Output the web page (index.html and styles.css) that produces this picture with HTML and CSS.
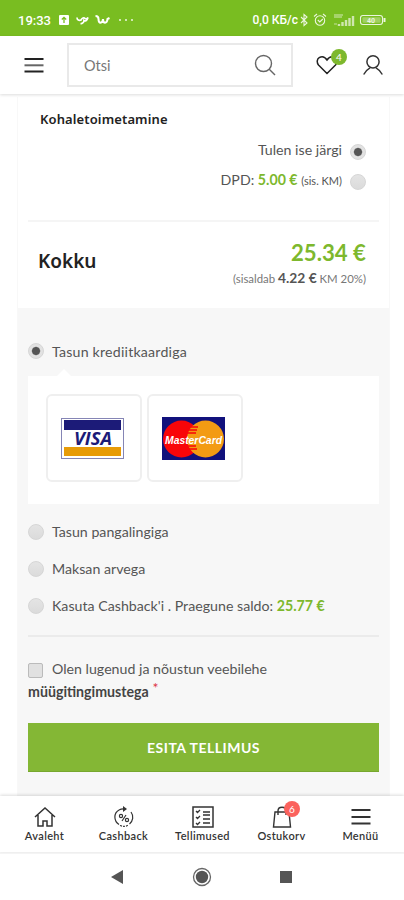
FILE: index.html
```html
<!DOCTYPE html>
<html lang="et">
<head>
<meta charset="utf-8">
<meta name="viewport" content="width=device-width">
<title>Tellimus</title>
<link rel="stylesheet" href="styles.css">
</head>
<body>
<div class="status">
  <span class="clock">19:33</span>
  <svg class="status-left" width="76" height="14" viewBox="0 0 76 14" fill="none" stroke="#fff">
    <rect x="1" y="2" width="10" height="10" rx="1" fill="#fff" stroke="none"/>
    <path d="M6 10V4.500M3.800 6.500 6 4.300 8.200 6.500" stroke="#79bd21" stroke-width="1.300"/>
    <path d="M19 4.500c0 2.500 2 3.500 4 2.500 1-2 3-3 4-1.500 1 .5 2 .5 3-1-1 3.500-3 4-4 3 0 2-2 3.500-3.500 3" stroke-width="1.700"/>
    <path d="M37.500 3c2 0 3 1 3 3 0 5 4 5 4.500 0 0 5 4 5 4.500 0l2-1" stroke-width="2"/>
    <path d="M61 7h2m4 0h2m4 0h2" stroke-width="2" opacity=".65"/>
  </svg>
  <span class="speed">0,0 КБ/с</span>
  <svg class="status-right" width="90" height="16" viewBox="0 0 90 16" fill="none" stroke="#fff" stroke-width="1.100" opacity=".85">
    <path d="M2 5l6 6-3 2.500V2.500L8 5l-6 6"/>
    <circle cx="21" cy="8.500" r="4.700"/><path d="M18.800 8l2 2 3-3M15 4.500l3-2.500M27 4.500 24 2"/>
    <path d="M40 14v-2m3.500 2v-4m3.500 4V8m3.500 6V6m3.500 8V4" stroke-width="2.400" opacity=".75"/>
    <path d="M35 3h9M35 5h8" opacity=".8"/><path d="M35 12h3" opacity=".6"/>
    <rect x="61.500" y="3.500" width="22" height="9" rx="2.500"/><rect x="63.500" y="5.300" width="18" height="5.400" rx="1" fill="#fff" stroke="none" opacity=".35"/>
    <path d="M85.500 6v4" stroke-width="2"/>
    <text x="68" y="11" class="battery">40</text>
  </svg>
</div>
<header class="header">
  <svg class="burger" width="20" height="18" viewBox="0 0 20 18" fill="none" stroke="#222" stroke-width="2"><path d="M.5 3h19M.5 15.500h19"/><path d="M.5 9.300h19" stroke="#666"/></svg>
  <div class="search"><span>Otsi</span>
    <svg width="22" height="22" viewBox="0 0 22 22" fill="none" stroke="#666" stroke-width="1.400"><circle cx="9.500" cy="9.500" r="8"/><path d="m15 15 6 6"/></svg>
  </div>
  <div class="wish">
    <svg width="22" height="20" viewBox="0 0 22 20" fill="none" stroke="#222" stroke-width="1.500"><path d="M11 18.500 2.500 10C.5 7.500 1 4 3.200 2.700 6 1 9 2 11 5c2-3 5-4 7.800-2.300C21 4 21.500 7.500 19.500 10z"/></svg>
    <span class="badge">4</span>
  </div>
  <svg class="user" width="22" height="22" viewBox="0 0 22 22" fill="none" stroke="#333" stroke-width="1.500"><circle cx="11" cy="7.800" r="6.100"/><path d="M1.700 20.500c1.800-3.300 4-5.500 6.300-6.700m6 0c2.300 1.200 4.500 3.400 6.300 6.700"/></svg>
</header>
<main class="page">
  <section class="totals">
    <h3>Kohaletoimetamine</h3>
    <div class="ship"><span class="pickup">Tulen ise järgi</span><i class="radio on"></i></div>
    <div class="ship second"><span class="dpd">DPD: <b>5.00 €</b> <small>(sis. KM)</small></span><i class="radio"></i></div>
    <div class="total">
      <h2>Kokku</h2>
      <div class="sum"><strong>25.34 €</strong><p>(sisaldab <b>4.22 €</b> KM 20%)</p></div>
    </div>
  </section>
  <section class="payment">
    <div class="option first"><i class="radio on"></i><span class="card-label">Tasun krediitkaardiga</span></div>
    <div class="cards">
      <div class="card"><svg width="63" height="41" viewBox="0 0 63 41">
        <rect x=".5" y=".5" width="62" height="40" fill="#fff" stroke="#8585b5"/>
        <path fill="#1c1b78" d="M3 2h57v10H3z"/><path fill="#e79b08" d="M3 29h57v9H3z"/>
        <text class="visa" x="13" y="27" textLength="38" lengthAdjust="spacingAndGlyphs">VISA</text>
      </svg></div>
      <div class="card"><svg width="63" height="43" viewBox="0 0 63 43">
        <path fill="#11117c" d="M0 0h63v43H0z"/><circle cx="19.500" cy="22" r="18.500" fill="#f90509"/><circle cx="43.500" cy="22" r="18.500" fill="#f39b13"/>
        <path d="M29 10h7m-9 3h8m-9 3h8m-8 13h8m-7 3h8" stroke="#f90509" stroke-width="1.500"/>
        <text class="mc" x="3" y="26.500" textLength="57" lengthAdjust="spacingAndGlyphs">MasterCard</text>
      </svg></div>
    </div>
    <div class="option"><i class="radio"></i><span class="bank">Tasun pangalingiga</span></div>
    <div class="option"><i class="radio"></i><span class="invoice">Maksan arvega</span></div>
    <div class="option"><i class="radio"></i><span class="cashback">Kasuta Cashback'i . Praegune saldo: <b>25.77 €</b></span></div>
    <div class="terms"><i class="check"></i><span class="read">Olen lugenud ja nõustun veebilehe</span><br><b>müügitingimustega</b> <em>*</em></div>
    <button class="submit">ESITA TELLIMUS</button>
  </section>
</main>
<nav class="tabs">
  <a><svg width="22" height="22" viewBox="0 0 22 22" fill="none" stroke="#333" stroke-width="1.500"><path d="M1 11 11 2l10 9M4 9v11h5v-5h4v5h5V9"/></svg><span>Avaleht</span></a>
  <a><svg width="22" height="22" viewBox="0 0 22 22" fill="none" stroke="#333" stroke-width="1.200"><path d="M18 6c3 4 2 9-1.500 12M6 18.500C.5 15 .5 7 6 4c2-1.200 4-1.500 6.500-1"/><path d="M7 19.500c3 1.200 6 1 8-.3" stroke-dasharray="2 1"/><path d="m10 0 4 3-4 3z" fill="#333" stroke="none"/><circle cx="8" cy="10" r="1.600"/><circle cx="14" cy="14" r="1.600"/><path d="m9 15 4-6"/></svg><span>Cashback</span></a>
  <a><svg width="22" height="22" viewBox="0 0 22 22" fill="none" stroke="#333" stroke-width="1.500"><rect x="1" y="1" width="20" height="20"/><path d="m4 5 1.500 1.500L8 4m-4 7 1.500 1.500L8 10m-4 7 1.500 1.500L8 16m3-10h7m-7 3h7m-7 4h7m-7 4h7" stroke-width="1.300"/></svg><span>Tellimused</span></a>
  <a class="cart"><svg width="22" height="22" viewBox="0 0 22 22" fill="none" stroke="#333" stroke-width="1.400"><path d="M4 6h14l1.500 15h-17zM7 9V5c0-5 8-5 8 0v4"/></svg><i class="badge">6</i><span>Ostukorv</span></a>
  <a><svg width="22" height="22" viewBox="0 0 22 22" fill="none" stroke="#333" stroke-width="1.800"><path d="M1.500 4h19m-19 7h19m-19 6.500h19"/></svg><span>Menüü</span></a>
</nav>
<footer class="system">
  <svg width="14" height="16" viewBox="0 0 14 16" fill="#555"><path d="M0 8 12 1v14z"/></svg>
  <svg width="20" height="20" viewBox="0 0 20 20"><circle cx="10" cy="10" r="8.500" fill="none" stroke="#666" stroke-width="1.300"/><circle cx="10" cy="10" r="6.200" fill="#555"/></svg>
  <svg width="14" height="14" viewBox="0 0 14 14"><path fill="#555" d="M1 1h12v12H1z"/></svg>
</footer>
</body>
</html>
```
FILE: styles.css
```css
* { box-sizing: border-box; }
body { margin: 0; width: 404px; height: 900px; overflow: hidden; display: flex; flex-direction: column; background: #fff; font-family: Lato, sans-serif; font-size: 14px; color: #555; }
svg { display: block; flex: none; }
h2, h3, p { margin: 0; }
i, em { font-style: normal; }

.status { height: 36px; flex: none; background: #79bd21; color: #fff; display: flex; align-items: center; padding: 4px 15px 0 18px; font-family: Roboto, sans-serif; }
.clock { font-size: 13px; font-weight: 500; width: 40px; }
.speed { margin-left: auto; font-size: 12px; font-weight: 500; white-space: nowrap; }
.status-right { margin-left: 1px; }
.battery { font: 700 7px Roboto, sans-serif; fill: #fff; stroke: none; }

.header { height: 58px; flex: none; display: flex; align-items: center; padding-left: 24px; box-shadow: 0 1px 3px rgba(0,0,0,.14); position: relative; background: #fff; }
.search { margin-left: 23px; width: 226px; height: 44px; border: 2px solid #e9e9e9; display: flex; align-items: center; justify-content: space-between; padding: 0 15px; font-size: 14.5px; color: #777; }
.wish { margin-left: 23px; position: relative; }
.badge { position: absolute; width: 16px; height: 16px; border-radius: 50%; background: #7db82d; color: #fff; font-size: 10px; line-height: 16px; text-align: center; }
.wish .badge { left: 15px; top: -6px; }
.user { margin-left: 24px; }

.page { width: 373px; margin: 3px 0 0 17px; height: 699px; flex: none; display: flex; flex-direction: column; border: solid #f8f8f8; border-width: 0 1px; }
.totals { height: 211px; padding: 0 10px; }
.totals h3 { font: 600 13px/20px "Noto Sans", sans-serif; letter-spacing: .12px; color: #222; margin: 12px 0 0 12px; height: 20px; }
.ship { display: flex; justify-content: flex-end; align-items: center; gap: 8px; padding-right: 13px; height: 30px; margin-top: 8px; font-size: 14.2px; }
.ship.second { margin-top: 0; }
.ship span { padding-bottom: 5px; }
.dpd b, .cashback b { color: #7db82d; }
.dpd small { font-size: 11px; }
.radio { width: 16px; height: 16px; border-radius: 50%; border: 1px solid #d6d6d6; background: linear-gradient(#e4e4e4, #dbdbdb); flex: none; display: block; }
.radio.on { background: radial-gradient(circle, #555 3.5px, #e2e2e2 4.700px); }
.total { display: flex; justify-content: space-between; border-top: 2px solid #f5f5f5; margin-top: 23px; padding: 16px 13px 0 10px; }
.total h2 { font: 600 19px/26px "Noto Sans", sans-serif; color: #222; margin-top: 10px; }
.sum { text-align: right; }
.sum strong { display: block; color: #7db82d; font-size: 22.2px; line-height: 29px; font-weight: 700; }
.sum p { font-size: 11.4px; line-height: 22px; color: #777; }
.sum p b { font-size: 13.8px; color: #555; }

.payment { flex: 1; background: #f7f7f7; padding: 34px 10px 0; }
.option { height: 37px; display: flex; align-items: center; gap: 8px; font-size: 14.2px; }
.option.first { height: 18px; }
.card-label { letter-spacing: .2px; }
.cards { width: 351px; height: 128px; background: #fff; margin: 16px 0 9px; padding: 18px; display: flex; gap: 5px; position: relative; }
.cards::before { content: ""; position: absolute; left: 29px; top: -7px; border: solid transparent; border-width: 0 7px 7px; border-bottom-color: #fff; }
.card { width: 96px; height: 88px; border: 2px solid #efefef; border-radius: 6px; display: flex; align-items: center; padding-left: 13px; }
.visa { font: italic 700 18px "Open Sans", sans-serif; fill: #1c1b78; }
.mc { font: italic 700 11px "Liberation Sans", sans-serif; fill: #fff; }
.terms { border-top: 2px solid #ebebeb; margin-top: 11px; padding-top: 20px; line-height: 23px; height: 88px; font-size: 14.2px; }
.check { display: inline-block; width: 15px; height: 15px; border: 1px solid #bbb; border-radius: 2px; background: #e1e1e1; vertical-align: -4px; margin-right: 9px; }
.terms b { color: #444; }
.terms em { color: #d34; position: relative; top: -4px; }
.submit { display: block; width: 351px; height: 49px; border: 0; padding: 0; background: #84b735; box-shadow: inset 0 -1px #77a72e; color: #fff; font: 700 14px Lato, sans-serif; letter-spacing: .5px; }

.tabs { height: 56px; flex: none; display: flex; padding: 10px 4px 0 5px; background: #fff; box-shadow: 0 -1px 3px rgba(0,0,0,.14); position: relative; }
.tabs a { flex: 1; display: flex; flex-direction: column; align-items: center; position: relative; font-size: 11px; line-height: 14px; font-weight: 600; letter-spacing: .35px; color: #333; }
.tabs span { margin-top: 1px; }
.cart .badge { background: #fb625d; left: 42px; top: -5px; font-weight: 400; letter-spacing: 0; }
.system { height: 48px; flex: none; border-top: 2px solid #f5f5f5; display: flex; align-items: center; justify-content: center; gap: 67px; }
```
